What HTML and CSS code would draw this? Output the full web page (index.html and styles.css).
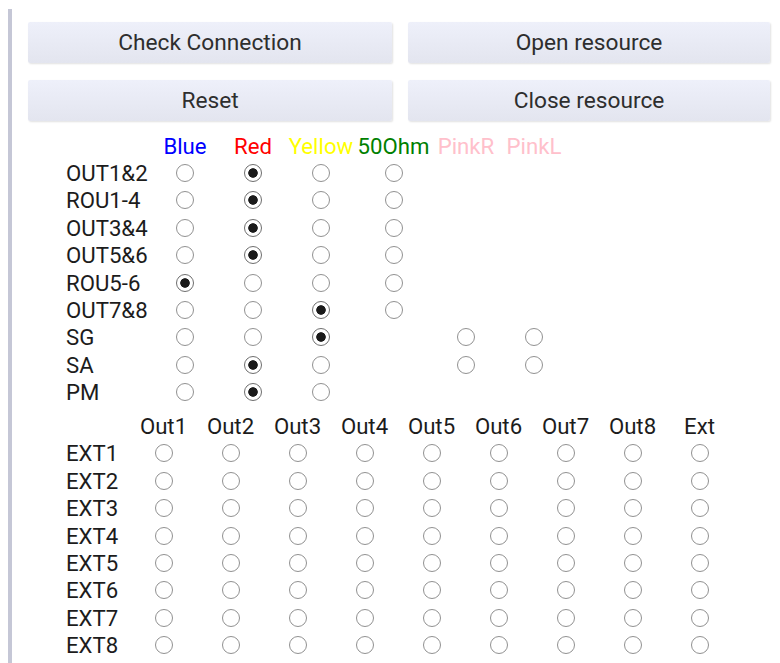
FILE: index.html
```html
<!DOCTYPE html>
<html lang="en">
<head>
<meta charset="utf-8">
<title>Switch Matrix</title>
<link rel="stylesheet" href="styles.css">
</head>
<body>
<div class="panel">
  <div class="actions">
    <button class="btn">Check Connection</button>
    <button class="btn">Open resource</button>
    <button class="btn">Reset</button>
    <button class="btn">Close resource</button>
  </div>

  <div class="matrix routes">
    <span></span>
    <span class="head blue">Blue</span>
    <span class="head red">Red</span>
    <span class="head yellow">Yellow</span>
    <span class="head green">50Ohm</span>
    <span class="head pink">PinkR</span>
    <span class="head pink">PinkL</span>

    <span class="label">OUT1&amp;2</span>
    <input type="radio" name="r1"><input type="radio" name="r1" checked><input type="radio" name="r1"><input type="radio" name="r1"><span></span><span></span>

    <span class="label">ROU1-4</span>
    <input type="radio" name="r2"><input type="radio" name="r2" checked><input type="radio" name="r2"><input type="radio" name="r2"><span></span><span></span>

    <span class="label">OUT3&amp;4</span>
    <input type="radio" name="r3"><input type="radio" name="r3" checked><input type="radio" name="r3"><input type="radio" name="r3"><span></span><span></span>

    <span class="label">OUT5&amp;6</span>
    <input type="radio" name="r4"><input type="radio" name="r4" checked><input type="radio" name="r4"><input type="radio" name="r4"><span></span><span></span>

    <span class="label">ROU5-6</span>
    <input type="radio" name="r5" checked><input type="radio" name="r5"><input type="radio" name="r5"><input type="radio" name="r5"><span></span><span></span>

    <span class="label">OUT7&amp;8</span>
    <input type="radio" name="r6"><input type="radio" name="r6"><input type="radio" name="r6" checked><input type="radio" name="r6"><span></span><span></span>

    <span class="label">SG</span>
    <input type="radio" name="r7"><input type="radio" name="r7"><input type="radio" name="r7" checked><span></span><input type="radio" name="r7"><input type="radio" name="r7">

    <span class="label">SA</span>
    <input type="radio" name="r8"><input type="radio" name="r8" checked><input type="radio" name="r8"><span></span><input type="radio" name="r8"><input type="radio" name="r8">

    <span class="label">PM</span>
    <input type="radio" name="r9"><input type="radio" name="r9" checked><input type="radio" name="r9"><span></span><span></span><span></span>
  </div>

  <div class="matrix ext">
    <span></span>
    <span class="head">Out1</span>
    <span class="head">Out2</span>
    <span class="head">Out3</span>
    <span class="head">Out4</span>
    <span class="head">Out5</span>
    <span class="head">Out6</span>
    <span class="head">Out7</span>
    <span class="head">Out8</span>
    <span class="head">Ext</span>

    <span class="label">EXT1</span>
    <input type="radio" name="e1"><input type="radio" name="e1"><input type="radio" name="e1"><input type="radio" name="e1"><input type="radio" name="e1"><input type="radio" name="e1"><input type="radio" name="e1"><input type="radio" name="e1"><input type="radio" name="e1">
    <span class="label">EXT2</span>
    <input type="radio" name="e2"><input type="radio" name="e2"><input type="radio" name="e2"><input type="radio" name="e2"><input type="radio" name="e2"><input type="radio" name="e2"><input type="radio" name="e2"><input type="radio" name="e2"><input type="radio" name="e2">
    <span class="label">EXT3</span>
    <input type="radio" name="e3"><input type="radio" name="e3"><input type="radio" name="e3"><input type="radio" name="e3"><input type="radio" name="e3"><input type="radio" name="e3"><input type="radio" name="e3"><input type="radio" name="e3"><input type="radio" name="e3">
    <span class="label">EXT4</span>
    <input type="radio" name="e4"><input type="radio" name="e4"><input type="radio" name="e4"><input type="radio" name="e4"><input type="radio" name="e4"><input type="radio" name="e4"><input type="radio" name="e4"><input type="radio" name="e4"><input type="radio" name="e4">
    <span class="label">EXT5</span>
    <input type="radio" name="e5"><input type="radio" name="e5"><input type="radio" name="e5"><input type="radio" name="e5"><input type="radio" name="e5"><input type="radio" name="e5"><input type="radio" name="e5"><input type="radio" name="e5"><input type="radio" name="e5">
    <span class="label">EXT6</span>
    <input type="radio" name="e6"><input type="radio" name="e6"><input type="radio" name="e6"><input type="radio" name="e6"><input type="radio" name="e6"><input type="radio" name="e6"><input type="radio" name="e6"><input type="radio" name="e6"><input type="radio" name="e6">
    <span class="label">EXT7</span>
    <input type="radio" name="e7"><input type="radio" name="e7"><input type="radio" name="e7"><input type="radio" name="e7"><input type="radio" name="e7"><input type="radio" name="e7"><input type="radio" name="e7"><input type="radio" name="e7"><input type="radio" name="e7">
    <span class="label">EXT8</span>
    <input type="radio" name="e8"><input type="radio" name="e8"><input type="radio" name="e8"><input type="radio" name="e8"><input type="radio" name="e8"><input type="radio" name="e8"><input type="radio" name="e8"><input type="radio" name="e8"><input type="radio" name="e8">
  </div>
</div>
</body>
</html>
```
FILE: styles.css
```css
html, body {
  margin: 0;
  background: #ffffff;
  font-family: Roboto, "Noto Sans", sans-serif;
  color: #1c1c1c;
  overflow: hidden;
}

.panel {
  margin: 9px 0 0 8px;
  min-height: 654px;
  border-left: 4px solid #c5c7d6;
  padding: 13px 10px 0 16px;
  box-sizing: border-box;
}

/* top button bar */
.actions {
  display: grid;
  grid-template-columns: 364px 362px;
  grid-auto-rows: 41px;
  column-gap: 16px;
  row-gap: 17px;
}

.btn {
  margin: 0;
  padding: 0;
  border: none;
  border-radius: 2px;
  background: linear-gradient(#eef0fa, #e3e5ef);
  box-shadow: 1px 1px 2px rgba(0, 0, 0, 0.12);
  font-family: Roboto, "Noto Sans", sans-serif;
  font-size: 22.7px;
  color: #2e2e2e;
}

/* radio matrices */
.matrix {
  display: grid;
  grid-auto-rows: 27.4px;
  align-items: center;
  justify-items: center;
  margin-left: 36px;
  font-size: 22.2px;
}

.routes {
  margin-top: 11px;
  grid-template-columns: 87px 68px 68px 68px 77px 68px 68px;
}

.ext {
  margin-top: 6.5px;
  grid-template-columns: 66px repeat(9, 67px);
}

.label {
  justify-self: start;
  padding-left: 2px;
  line-height: 1;
}

.head {
  line-height: 1;
  white-space: nowrap;
}

.blue { color: #0000ff; }
.red { color: #ff0000; }
.yellow { color: #ffff00; }
.green { color: #008000; }
.pink { color: #ffc0cb; }

input[type="radio"] {
  appearance: none;
  -webkit-appearance: none;
  margin: 0;
  width: 18px;
  height: 18px;
  box-sizing: border-box;
  border: 1.6px solid #919191;
  border-radius: 50%;
  background: #ffffff;
}

input[type="radio"]:checked {
  border-color: #6e6e6e;
  background: radial-gradient(circle, #1a1a1a 0 4.4px, #ffffff 5.1px);
}
```
